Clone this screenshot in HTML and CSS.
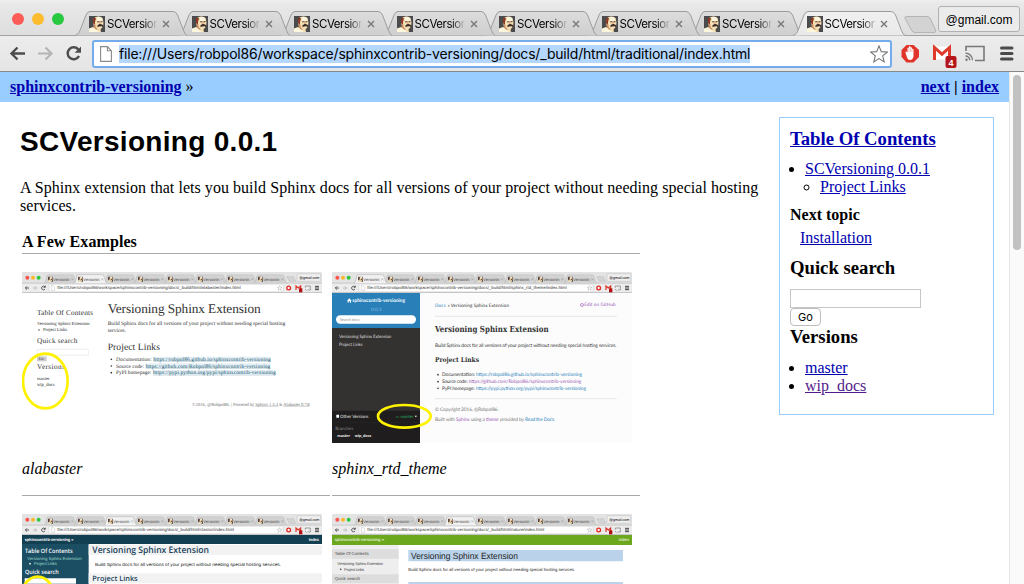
FILE: index.html
```
<!DOCTYPE html>
<html lang="en">
<head>
<meta charset="utf-8">
<title>SCVersioning 0.0.1</title>
<link rel="stylesheet" href="styles.css">
</head>
<body>
<svg class="defs" aria-hidden="true">
  <defs>
    <linearGradient id="tabFill" x1="0" y1="0" x2="0" y2="1"><stop offset="0" stop-color="#dcdcdc"/><stop offset="1" stop-color="#cfcfcf"/></linearGradient>
    <linearGradient id="activeFill" x1="0" y1="0" x2="0" y2="1"><stop offset="0" stop-color="#f0f0f0"/><stop offset="1" stop-color="#e9e9e9"/></linearGradient>
  </defs>
  <symbol id="face" viewBox="0 0 16 16">
    <path fill="#4b4a4c" d="M0 0h16v16H0z"/>
    <path fill="#f4dfb4" d="M6 1.200Q10-.5 13.500 2l1 4.500-.5 4-2.500 3 .5 2.500H2l3-5-1-5z"/>
    <path fill="#fcf6dc" d="M8 1q4-.8 5.500 2l-.5 2.500-5-.5zM0 12.500l4-1.500 6 5H0z"/>
    <path fill="#8c3a24" d="M4 2.500Q6 1 7 2.500L6 6v3L4 7z"/>
    <path fill="#5c3025" d="M8 5.500l2.500-.3v1H8zM11.500 5.300h2v1h-2z"/>
    <path fill="#3a2c28" d="M8.500 9.200l2.500-1.400 3 1.200v2l-1.500-.8-2.500.3-1.500.7z"/>
    <path fill="#c98a5e" d="M5 8.500h1.500V11L9 13.500H7L4.500 11zM10.500 5.500h.8v2.300h-.8z"/>
  </symbol>
  <symbol id="tab" viewBox="0 0 112 25">
    <path d="M0 24.500C3 23.500 4 22 5 19.500L11 4Q12.500.5 15 .5H98Q101 .5 102.500 4L108.500 19.500Q110 23.500 112 24.500" stroke="#9c9c9c"/>
  </symbol>
  <symbol id="thumbTab" viewBox="0 0 100 28">
    <path d="M0 27Q4 25 5 20L9 4Q10 1 13 1H84Q88 1 89 4L95 22Q96 26 100 27" stroke="#a6a6a6"/>
    <use href="#face" x="12" y="6" width="15" height="17"/>
    <text class="t-sans" x="28" y="19" font-size="12.500" textLength="48" lengthAdjust="spacingAndGlyphs" fill="#444">Versionin</text>
    <path d="M82 12l6 6m0-6l-6 6" stroke="#777"/>
  </symbol>
  <symbol id="chrome" viewBox="21 21 900 63">
    <path fill="#e3e3e3" d="M21 25q0-4 4-4h892q4 0 4 4v59H21z"/>
    <path fill="#ececec" d="M21 54h900v28H21z"/>
    <path stroke="#a9a9a9" stroke-width="1.500" d="M21 54.500h900M21 82.500h900"/>
    <circle cx="37" cy="38" r="6" fill="#f9564f"/><circle cx="54" cy="38" r="6" fill="#f8b92f"/><circle cx="71" cy="38" r="6" fill="#2fc840"/>
    <g fill="#d2d2d2">
      <use href="#thumbTab" x="87" y="28" width="100" height="28"/><use href="#thumbTab" x="177" y="28" width="100" height="28"/>
      <use href="#thumbTab" x="267" y="28" width="100" height="28"/><use href="#thumbTab" x="357" y="28" width="100" height="28"/>
      <use href="#thumbTab" x="447" y="28" width="100" height="28"/><use href="#thumbTab" x="537" y="28" width="100" height="28"/>
      <use href="#thumbTab" x="627" y="28" width="100" height="28"/><use href="#thumbTab" x="717" y="28" width="100" height="28"/>
    </g>
    <path fill="#d4d4d4" stroke="#aaa" d="M815 35h20l7 14h-19z"/>
    <rect x="846" y="26" width="71" height="23" rx="3" fill="#eee" stroke="#aaa"/>
    <text class="t-sans" x="853" y="42" font-size="11.500" textLength="60" lengthAdjust="spacingAndGlyphs">@gmail.com</text>
    <path fill="none" stroke="#444" stroke-width="2.500" d="M42 69H31m5-5l-5 5 5 5"/>
    <path fill="none" stroke="#aaa" stroke-width="2" d="M54 69h11m-5-5l5 5-5 5"/>
    <path fill="none" stroke="#444" stroke-width="2.500" d="M111 66a5.500 5.500 0 1 0 0 6M112 62v5h-5"  transform="translate(-21 0)"/>
    <rect x="122" y="58" width="682" height="22" fill="#fff"/>
    <rect x="102" y="58" width="702" height="22" rx="2" fill="#fff" stroke="#b5b5b5"/>
    <path fill="none" stroke="#999" d="M109 62h6l4 4v10h-10z"/>
    <path fill="none" stroke="#888" d="M794 62l2 5h5l-4 3 2 6-5-3-5 3 2-6-4-3h5z"/>
    <circle cx="821" cy="69" r="5.500" fill="#fff" stroke="#e12a20" stroke-width="4"/>
    <path fill="none" stroke="#d93025" stroke-width="3.500" d="M843 75V63l7 6 7-6v9"/>
    <rect x="852" y="70" width="10" height="12" fill="#b00f16"/>
    <path fill="none" stroke="#777" stroke-width="2" d="M871 68v-5h15v12h-8M870 72l5 5"/>
    <path stroke="#444" stroke-width="3" d="M900 64h12m-12 5h12m-12 5h12"/>
  </symbol>
</svg>

<header class="browser">
  <div class="tabstrip">
    <div class="lights"><i class="light red"></i><i class="light amber"></i><i class="light green"></i></div>
    <div class="tabs">
      <div class="tab"><svg class="shape"><use href="#tab"/></svg><svg class="fav"><use href="#face"/></svg><span class="name">SCVersion</span><svg class="close" viewBox="0 0 8 8"><path d="M1 1l6 6M7 1L1 7"/></svg></div>
      <div class="tab"><svg class="shape"><use href="#tab"/></svg><svg class="fav"><use href="#face"/></svg><span class="name">SCVersion</span><svg class="close" viewBox="0 0 8 8"><path d="M1 1l6 6M7 1L1 7"/></svg></div>
      <div class="tab"><svg class="shape"><use href="#tab"/></svg><svg class="fav"><use href="#face"/></svg><span class="name">SCVersion</span><svg class="close" viewBox="0 0 8 8"><path d="M1 1l6 6M7 1L1 7"/></svg></div>
      <div class="tab"><svg class="shape"><use href="#tab"/></svg><svg class="fav"><use href="#face"/></svg><span class="name">SCVersion</span><svg class="close" viewBox="0 0 8 8"><path d="M1 1l6 6M7 1L1 7"/></svg></div>
      <div class="tab"><svg class="shape"><use href="#tab"/></svg><svg class="fav"><use href="#face"/></svg><span class="name">SCVersion</span><svg class="close" viewBox="0 0 8 8"><path d="M1 1l6 6M7 1L1 7"/></svg></div>
      <div class="tab"><svg class="shape"><use href="#tab"/></svg><svg class="fav"><use href="#face"/></svg><span class="name">SCVersion</span><svg class="close" viewBox="0 0 8 8"><path d="M1 1l6 6M7 1L1 7"/></svg></div>
      <div class="tab"><svg class="shape"><use href="#tab"/></svg><svg class="fav"><use href="#face"/></svg><span class="name">SCVersion</span><svg class="close" viewBox="0 0 8 8"><path d="M1 1l6 6M7 1L1 7"/></svg></div>
      <div class="tab active"><svg class="shape"><use href="#tab"/></svg><svg class="fav"><use href="#face"/></svg><span class="name">SCVersion</span><svg class="close" viewBox="0 0 8 8"><path d="M1 1l6 6M7 1L1 7"/></svg></div>
    </div>
    <svg class="newtab" viewBox="0 0 33 17"><path d="M2.500.5H23q2.500 0 3.500 2.500l5 11q1 2.500-1.500 2.500H11q-2.500 0-3.500-2.500L1 2.500Q.5.5 2.500.5z" fill="#d3d3d3" stroke="#b4b4b4"/></svg>
    <div class="profile">@gmail.com</div>
  </div>
  <div class="toolbar">
    <svg class="nav" viewBox="0 0 80 20">
      <path d="M25 10.500H12M17.500 4.500l-6 6 6 6" stroke="#4d4d4d" stroke-width="2.400"/>
      <path d="M38 10.500h13M45.500 4.500l6 6-6 6" stroke="#b5b5b5" stroke-width="2.200"/>
      <path d="M78.500 6.700A6 6 0 1 0 79 13" stroke="#4d4d4d" stroke-width="2.500"/>
      <path d="M81 3.500v6.300h-6.300z" fill="#4d4d4d" stroke="none"/>
    </svg>
    <div class="omnibox">
      <svg class="page" viewBox="0 0 12 16"><path d="M.6.6h6.800l4 4.200v10.600H.6zM7.400.6v4.200h4" fill="#fff" stroke="#8b8b8b" stroke-width="1.100"/></svg>
      <span class="url">file:///Users/robpol86/workspace/sphinxcontrib-versioning/docs/_build/html/traditional/index.html</span>
      <svg class="star" viewBox="0 0 18 18"><path d="M9 .9l2.300 5.700 6.100.4-4.700 3.900 1.500 6L9 13.600l-5.200 3.300 1.500-6L.6 7l6.100-.4z" fill="#fff" stroke="#777" stroke-width="1.100"/></svg>
    </div>
    <svg class="extensions" viewBox="0 0 124 30">
      <path d="M6.500 5h7L19 10v7l-5.500 5.500h-7L1.500 17v-7z" fill="#e0352b"/>
      <path d="M5.500 12.500q0-1.500 1.300-.8l.7.800V8q1-1.200 1.500 0V6.700q1-1.200 1.500 0v1q1-.8 1.500.3v1q1.200-.7 1.500.4V16q-.5 4-3.500 4-2 0-3-2.500z" fill="#fff"/>
      <path d="M9 8v4m1.500-4v4m1.500-3v3" stroke="#e0352b" stroke-width=".3"/>
      <path d="M33 6.500h18v13H33z" fill="#fff"/>
      <path d="M34.500 20V7.500l7.500 6.700 7.500-6.700V20" fill="none" stroke="#df3b2d" stroke-width="3"/>
      <rect x="45.500" y="16" width="11" height="12" rx="2" fill="#b5161c"/>
      <text x="48.500" y="25.500" fill="#fff" class="badge">4</text>
      <path d="M66 11V6.500h18v14H75" fill="none" stroke="#777" stroke-width="1.600"/>
      <path d="M65.500 13.200a7 7 0 0 1 7 7M65.500 16a4.300 4.300 0 0 1 4.300 4.300" fill="none" stroke="#777" stroke-width="1.300"/><circle cx="66.500" cy="19.700" r="1.200" fill="#777"/>
      <path d="M101.500 8h10.500M101.500 13.500h10.500M101.500 19h10.500" stroke="#4b4b4b" stroke-width="3" stroke-linecap="round"/>
    </svg>
  </div>
</header>

<div class="viewport">
  <div class="doc">
    <nav class="relbar"><span><a href="#">sphinxcontrib-versioning</a> »</span><span class="right"><a href="#">next</a><b class="bar">|</b><a href="#">index</a></span></nav>
    <div class="columns">
      <main>
        <h1>SCVersioning 0.0.1</h1>
        <p class="intro">A Sphinx extension that lets you build Sphinx docs for all versions of your project without needing special hosting services.</p>
        <div class="examples">
          <h4>A Few Examples</h4>
          <figure>
            <svg class="thumb" viewBox="21 21 900 513">
              <use href="#chrome" x="21" y="21" width="900" height="63"/>
              <use href="#thumbTab" x="177" y="28" width="100" height="28" fill="#f1f1f1"/>
              <text class="t-sans" x="127" y="73" font-size="13" textLength="550" lengthAdjust="spacingAndGlyphs" fill="#333">file:///Users/robpol86/workspace/sphinxcontrib-versioning/docs/_build/html/alabaster/index.html</text>
              <g class="t-serif" fill="#333">
                <text x="66" y="149" font-size="22" textLength="168">Table Of Contents</text>
                <text x="66" y="181" font-size="14" textLength="158">Versioning Sphinx Extension</text>
                <text x="84" y="199" font-size="14" textLength="72">Project Links</text><circle cx="72" cy="195" r="2"/>
                <text x="66" y="235" font-size="22" textLength="121">Quick search</text>
                <path d="M67 253h153v18H67z" fill="#fff" stroke="#ccc"/>
                <rect x="66" y="274" width="29" height="15" fill="#ccc"/><text x="71" y="286" font-size="13">Go</text>
                <text x="66" y="313" font-size="22" textLength="84">Versions</text>
                <text x="66" y="344" font-size="14" textLength="38">master</text><text x="66" y="362" font-size="14" textLength="53">wip_docs</text>
                <text x="278" y="144" font-size="40" textLength="459">Versioning Sphinx Extension</text>
                <text x="278" y="181" font-size="16.500" textLength="533">Build Sphinx docs for all versions of your project without needing special hosting</text>
                <text x="278" y="201" font-size="16.500" textLength="55">services.</text>
                <text x="278" y="256" font-size="29" textLength="157">Project Links</text>
                <circle cx="289" cy="283" r="2.500"/><circle cx="289" cy="303" r="2.500"/><circle cx="289" cy="323" r="2.500"/>
                <text x="303" y="287" font-size="16.500" textLength="107">Documentation:</text><text x="303" y="308" font-size="16.500" textLength="84">Source code:</text><text x="303" y="328" font-size="16.500" textLength="106">PyPI homepage:</text>
                <path fill="#e4f0f5" d="M415 275h352v14H415zM392 295h374v15H392zM414 315h368v15H414z"/>
                <path stroke="#7fa3b3" d="M415 289.500h352M392 310.500h374M414 330.500h368"/>
                <g fill="#14506c"><text x="415" y="287" font-size="16.500" textLength="352">https://robpol86.github.io/sphinxcontrib-versioning</text><text x="392" y="308" font-size="16.500" textLength="374">https://github.com/Robpol86/sphinxcontrib-versioning</text><text x="414" y="328" font-size="16.500" textLength="368">https://pypi.python.org/pypi/sphinxcontrib-versioning</text></g>
                <path stroke="#999" d="M721 424.500h68M805 424.500h79"/>
                <g fill="#777"><text x="532" y="422" font-size="14" textLength="186">©2016, @Robpol86. | Powered by</text><text x="721" y="422" font-size="14" textLength="68">Sphinx 1.4.4</text><text x="792" y="422" font-size="13">&amp;</text><text x="805" y="422" font-size="14" textLength="79">Alabaster 0.7.8</text></g>
              </g>
              <ellipse class="ring" cx="91" cy="348" rx="67" ry="82"/>
            </svg>
            <figcaption>alabaster</figcaption>
          </figure>
          <figure>
            <svg class="thumb" viewBox="21 21 900 513">
              <use href="#chrome" x="21" y="21" width="900" height="63"/>
              <use href="#thumbTab" x="87" y="28" width="100" height="28" fill="#f1f1f1"/>
              <text class="t-sans" x="127" y="73" font-size="13" textLength="598" lengthAdjust="spacingAndGlyphs" fill="#333">file:///Users/robpol86/workspace/sphinxcontrib-versioning/docs/_build/html/sphinx_rtd_theme/index.html</text>
              <path fill="#fcfcfc" d="M285 84h636v450H285z"/><path fill="#343131" d="M21 84h264v450H21z"/>
              <path fill="#2980b9" d="M21 84h264v105H21z"/><path fill="#1f1d1d" d="M21 437h264v97H21z"/>
              <rect x="33" y="151" width="240" height="25" rx="12.500" fill="#fff"/>
              <path d="M21 472h264" stroke="#333"/>
              <g class="t-lato">
                <g fill="#fff"><path d="M66 107l7-7 7 7h-2v6h-3v-4h-4v4h-3v-6z"/><text x="82" y="112" font-size="15" font-weight="bold" textLength="158" lengthAdjust="spacingAndGlyphs">sphinxcontrib-versioning</text></g>
                <text x="138" y="138" font-size="14" textLength="32" fill="#8dbce0">0.0.1</text>
                <text x="44" y="168" font-size="12" textLength="60" fill="#999">Search docs</text>
                <text x="42" y="218" font-size="13.500" textLength="157" fill="#ddd">Versioning Sphinx Extension</text><text x="42" y="244" font-size="13.500" textLength="71" fill="#ddd">Project Links</text>
                <text x="330" y="126" font-size="14" textLength="32" fill="#2980b9">Docs</text><text x="368" y="126" font-size="14" textLength="184" fill="#333">» Versioning Sphinx Extension</text>
                <circle cx="771" cy="120" r="4.500" fill="none" stroke="#9b59b6" stroke-width="2"/><text x="778" y="124" font-size="14" textLength="94" fill="#9b59b6">Edit on GitHub</text>
                <path d="M330 154h545M330 401h545" stroke="#ddd" stroke-width="2"/>
                <g fill="#333"><text x="330" y="246" font-size="14.500" textLength="544">Build Sphinx docs for all versions of your project without needing special hosting services.</text>
                <circle cx="339" cy="329" r="2.500"/><circle cx="339" cy="350" r="2.500"/><circle cx="339" cy="370" r="2.500"/>
                <text x="351" y="332" font-size="14.500" textLength="99">Documentation:</text><text x="351" y="353" font-size="14.500" textLength="77">Source code:</text><text x="351" y="374" font-size="14.500" textLength="98">PyPI homepage:</text></g>
                <text x="453" y="332" font-size="14.500" textLength="318" fill="#2980b9">https://robpol86.github.io/sphinxcontrib-versioning</text><text x="431" y="353" font-size="14.500" textLength="338" fill="#9b59b6">https://github.com/Robpol86/sphinxcontrib-versioning</text><text x="453" y="374" font-size="14.500" textLength="330" fill="#2980b9">https://pypi.python.org/pypi/sphinxcontrib-versioning</text>
                <g fill="#777" font-size="14.500"><text x="330" y="438" textLength="191">© Copyright 2016, @Robpol86.</text><text x="330" y="468" textLength="60">Built with</text><text x="393" y="468" textLength="41" fill="#9b59b6">Sphinx</text><text x="438" y="468" textLength="42">using a</text><text x="483" y="468" textLength="38" fill="#9b59b6">theme</text><text x="525" y="468" textLength="72">provided by</text><text x="600" y="468" textLength="90" fill="#2980b9">Read the Docs.</text></g>
                <path fill="#fff" d="M34 449h8v9h-8zM269 452h7l-3.500 5z"/><text x="45" y="458" font-size="13.500" textLength="85" fill="#eee">Other Versions</text><text x="213" y="459" font-size="13" textLength="53" fill="#27ae60">v: master</text>
                <text x="31" y="495" font-size="13.500" textLength="54" fill="#888">Branches</text><text x="37" y="515" font-size="12" font-weight="bold" textLength="38" fill="#fff">master</text><text x="89" y="515" font-size="12" font-weight="bold" textLength="50" fill="#fff">wip_docs</text>
              </g>
              <g class="t-slab" fill="#333"><text x="330" y="200" font-size="25" textLength="341" lengthAdjust="spacingAndGlyphs">Versioning Sphinx Extension</text><text x="330" y="292" font-size="20" textLength="132" lengthAdjust="spacingAndGlyphs">Project Links</text></g>
              <ellipse class="ring" cx="238" cy="454" rx="79" ry="34"/>
            </svg>
            <figcaption>sphinx_rtd_theme</figcaption>
          </figure>
          <figure>
            <svg class="thumb" viewBox="21 21 900 513">
              <use href="#chrome" x="21" y="21" width="900" height="63"/>
              <use href="#thumbTab" x="267" y="28" width="100" height="28" fill="#f1f1f1"/>
              <text class="t-sans" x="127" y="73" font-size="13" textLength="530" lengthAdjust="spacingAndGlyphs" fill="#333">file:///Users/robpol86/workspace/sphinxcontrib-versioning/docs/_build/html/classic/index.html</text>
              <path fill="#133f52" d="M21 84h900v27H21z"/><path fill="#1c4e63" d="M21 111h200v423H21z"/><path fill="#f2f2f2" d="M221 114h700v30H221zM221 199h700v30H221z"/>
              <g class="t-sans"><text x="29" y="102" font-size="12.500" font-weight="bold" textLength="146" lengthAdjust="spacingAndGlyphs" fill="#fff">sphinxcontrib-versioning »</text><text x="881" y="102" font-size="12.500" font-weight="bold" textLength="31" lengthAdjust="spacingAndGlyphs" fill="#fff">index</text>
              <text x="37" y="160" font-size="13" textLength="163" fill="#98dbcc">Versioning Sphinx Extension</text><circle cx="45" cy="170" r="2.500" fill="#fff"/><text x="57" y="174" font-size="13" textLength="69" fill="#98dbcc">Project Links</text>
              <text x="240" y="177" font-size="13.500" textLength="558" lengthAdjust="spacingAndGlyphs" fill="#111">Build Sphinx docs for all versions of your project without needing special hosting services.</text></g>
              <g class="t-open" fill="#fff" font-weight="600"><text x="30" y="137" font-size="18" textLength="143" lengthAdjust="spacingAndGlyphs">Table Of Contents</text><text x="30" y="201" font-size="18" textLength="101" lengthAdjust="spacingAndGlyphs">Quick search</text></g>
              <g class="t-open" fill="#20435c" font-weight="600"><text x="232" y="138" font-size="27" textLength="350" lengthAdjust="spacingAndGlyphs">Versioning Sphinx Extension</text><text x="232" y="223" font-size="22" textLength="136" lengthAdjust="spacingAndGlyphs">Project Links</text></g>
              <path fill="#fff" d="M29 214h154v16H29z"/>
              <ellipse class="ring" cx="68" cy="285" rx="54" ry="76"/>
            </svg>
          </figure>
          <figure>
            <svg class="thumb" viewBox="21 21 900 513">
              <use href="#chrome" x="21" y="21" width="900" height="63"/>
              <use href="#thumbTab" x="357" y="28" width="100" height="28" fill="#f1f1f1"/>
              <text class="t-sans" x="127" y="73" font-size="13" textLength="531" lengthAdjust="spacingAndGlyphs" fill="#333">file:///Users/robpol86/workspace/sphinxcontrib-versioning/docs/_build/html/nature/index.html</text>
              <path fill="#6ba81e" d="M21 84h900v30H21z"/><path fill="#eee" d="M21 114h200v420H21z"/><path fill="#ddd" d="M21 127h200v28H21zM21 202h200v27H21z"/><path fill="#bad3ea" d="M250 129h644v34H250zM250 225h644v30H250z"/>
              <g class="t-sans"><text x="29" y="102" font-size="12.500" textLength="148" lengthAdjust="spacingAndGlyphs" fill="#fff">sphinxcontrib-versioning »</text><text x="881" y="102" font-size="12.500" textLength="31" fill="#fff">index</text>
              <g fill="#444"><text x="29" y="145" font-size="13" textLength="102">Table Of Contents</text><text x="37" y="175" font-size="12" textLength="137">Versioning Sphinx Extension</text><circle cx="47" cy="187" r="2.500"/><text x="57" y="191" font-size="12" textLength="60">Project Links</text><text x="29" y="220" font-size="13" textLength="76">Quick search</text></g>
              <text x="258" y="157" font-size="27" textLength="321" lengthAdjust="spacingAndGlyphs" fill="#222">Versioning Sphinx Extension</text><text x="250" y="193" font-size="13" textLength="500" lengthAdjust="spacingAndGlyphs" fill="#222">Build Sphinx docs for all versions of your project without needing special hosting services.</text><text x="258" y="245" font-size="20" textLength="110" fill="#fff">Project Links</text></g>
            </svg>
          </figure>
        </div>
      </main>
      <aside>
        <h3><a href="#">Table Of Contents</a></h3>
        <ul><li><a href="#">SCVersioning 0.0.1</a><ul><li><a href="#">Project Links</a></li></ul></li></ul>
        <h4>Next topic</h4>
        <p class="topic"><a href="#">Installation</a></p>
        <h3>Quick search</h3>
        <form><input type="text" aria-label="Search"><button type="button">Go</button></form>
        <h3>Versions</h3>
        <ul class="versions"><li><a href="#">master</a></li><li><a class="visited" href="#">wip_docs</a></li></ul>
      </aside>
    </div>
  </div>
  <div class="scrollbar"><div class="grip"></div></div>
</div>
</body>
</html>
```
FILE: styles.css
```
* { box-sizing: border-box; }
body { margin: 0; width: 1024px; height: 584px; overflow: hidden; background: #fff; font: 16px/18px "Liberation Serif", serif; color: #000; }
.defs { position: absolute; width: 0; height: 0; }

/* Browser frame */
.browser { height: 72px; border-bottom: 1px solid #85888a; background: #ebebeb; font-family: Inter, sans-serif; }
.tabstrip { display: flex; height: 36px; border-bottom: 1px solid #a2a2a2; background: linear-gradient(#efefef 0, #e8e8e8 4px, #dedede); }
.lights { display: flex; gap: 8px; width: 75px; padding: 13px 0 0 12px; }
.light { width: 12px; height: 12px; border-radius: 50%; }
.red { background: #fc5b57; }
.amber { background: #fdbc2e; }
.green { background: #28c840; }
.tabs { display: flex; width: 829px; padding-top: 11px; }
.tab { position: relative; display: flex; align-items: center; flex: none; width: 102.5px; height: 25px; padding-left: 14px; }
.shape { position: absolute; left: 0; top: 0; width: 112px; height: 25px; fill: url(#tabFill); }
.tab:nth-child(1) { z-index: 8; }
.tab:nth-child(2) { z-index: 7; }
.tab:nth-child(3) { z-index: 6; }
.tab:nth-child(4) { z-index: 5; }
.tab:nth-child(5) { z-index: 4; }
.tab:nth-child(6) { z-index: 3; }
.tab:nth-child(7) { z-index: 2; }
.tab.active { z-index: 9; }
.active .shape { fill: url(#activeFill); }
.fav { position: relative; flex: none; width: 16px; height: 16px; }
.name { position: relative; width: 50px; margin-left: 2px; padding-top: 1px; font-size: 11.5px; letter-spacing: -.45px; color: transparent; background: linear-gradient(90deg, #000 72%, #ccc) text; -webkit-background-clip: text; background-clip: text; white-space: nowrap; }
.close { position: relative; width: 8px; height: 8px; margin-left: 5px; stroke: #777; stroke-width: 1.4; }
.newtab { width: 33px; height: 17px; margin-top: 16px; }
.profile { width: 82px; height: 26px; margin: 6px 0 0 1px; border: 1px solid #b0b0b0; border-radius: 3px; background: #ebebeb; font: 12px/26px "Liberation Sans", sans-serif; text-align: center; white-space: nowrap; }
.toolbar { display: flex; height: 35px; padding-top: 4px; background: linear-gradient(#ececec, #e5e5e5); }
.nav { width: 80px; height: 20px; margin: 3px 12px 0 0; overflow: visible; fill: none; }
.omnibox { display: flex; align-items: center; width: 800px; height: 28px; border: 2px solid #74abec; border-radius: 3px; padding: 0 2px 0 6px; background: #fff; }
.page { width: 12px; height: 16px; margin-right: 7px; }
.url { background: #b3d7ff; font-size: 14px; line-height: 18px; letter-spacing: -.19px; white-space: nowrap; }
.star { width: 18px; height: 18px; margin-left: auto; }
.extensions { width: 124px; height: 30px; margin-left: 8px; }
.badge { font: bold 9px "Liberation Sans", sans-serif; }

/* Page */
.viewport { display: flex; height: 512px; }
.doc { width: 1009px; overflow: hidden; }
.scrollbar { width: 15px; padding: 3px 3px 0; border-left: 1px solid #e7e7e7; background: #fafafa; }
.grip { width: 8px; height: 175px; border-radius: 4px; background: #c1c1c1; }
a { color: #0000b0; text-decoration: underline; }
.visited { color: #551a8b; }
.relbar { display: flex; justify-content: space-between; height: 30px; padding: 6px 10px; background: #9cf; }
.relbar a { font-weight: bold; }
.bar { margin: 0 4px; font-family: "Liberation Sans", sans-serif; font-size: 14px; font-weight: normal; }
.columns { display: flex; justify-content: space-between; align-items: flex-start; padding: 15px 15px 0 20px; }
main { width: 742px; }
h1 { margin: 8px 0 21px; font: bold 28px/33px "Liberation Sans", sans-serif; letter-spacing: .3px; }
p { margin: 0; }
.intro { letter-spacing: .045px; }
.examples { display: grid; grid-template-columns: 308px 308px; gap: 2px; margin: 18px 0 0 2px; }
.examples h4 { grid-column: 1 / -1; height: 21px; margin: 0; border-bottom: 1px solid #aaa; font-size: 16px; letter-spacing: .08px; }
figure { height: 240px; margin: 0; padding-top: 16px; border-bottom: 1px solid #aaa; }
.thumb { display: block; width: 300px; height: 171px; text-rendering: geometricPrecision; }
figcaption { margin-top: 17px; font-style: italic; }
.t-sans { font-family: "Liberation Sans", sans-serif; }
.t-serif { font-family: "Liberation Serif", serif; }
.t-lato { font-family: Lato, sans-serif; }
.t-open { font-family: "Open Sans", sans-serif; }
.t-slab { font-family: "DejaVu Serif", serif; font-weight: bold; }
.ring { fill: none; stroke: #fff200; stroke-width: 8; }

aside { width: 215px; height: 298px; padding: 10px; border: 1px solid #9cf; }
aside h3 { margin: 0; font-size: 18.7px; line-height: 21px; }
aside ul { margin: 11px 0 0; padding-left: 15px; }
aside ul ul { margin: 0; }
aside h4 { margin: 10px 0 5px; font-size: 16px; }
.topic { padding: 0 0 10px 10px; }
form { display: flex; flex-direction: column; align-items: flex-start; margin-top: 11px; }
input { width: 131px; height: 19px; border: 1px solid #c6c6c6; padding: 0; }
button { width: 31px; height: 18px; padding: 0; border: 1px solid #bdbdbd; border-radius: 4px; background: #fff; font: 11px/14px Inter, sans-serif; }
.versions { margin-top: 12px; }
```
